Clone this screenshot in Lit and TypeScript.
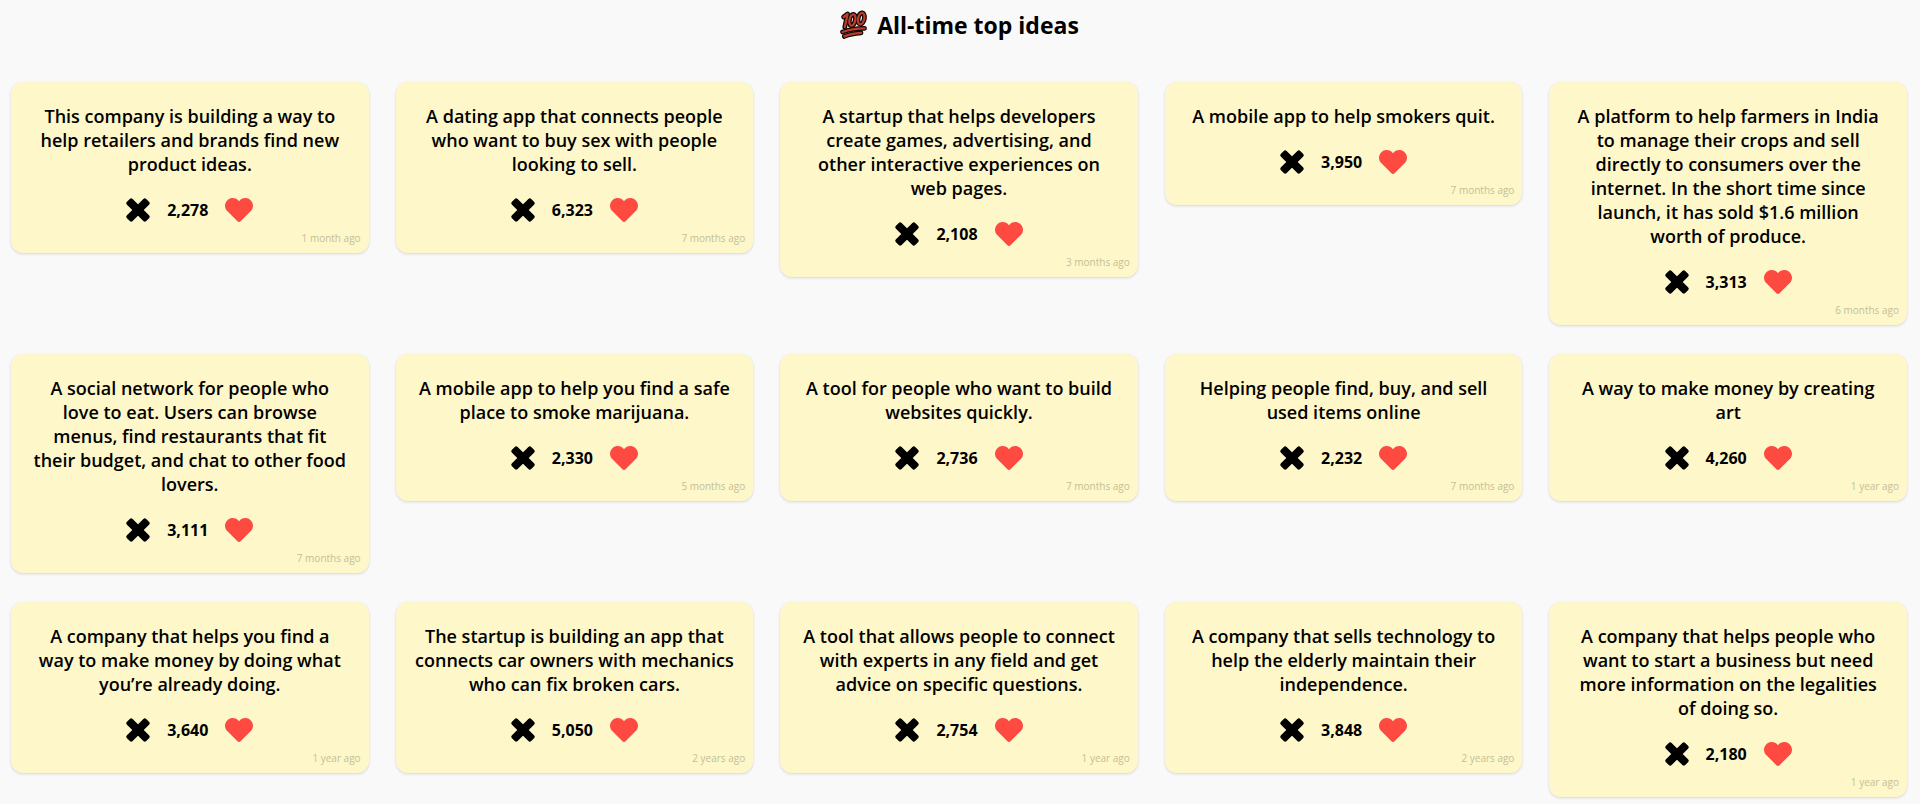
import { LitElement, html, css, svg } from "lit";
import { customElement, property } from "lit/decorators.js";

interface Idea {
  text: string;
  votes: number;
  age: string;
}

const IDEAS: Idea[] = [
  { text: "This company is building a way to help retailers and brands find new product ideas.", votes: 2278, age: "1 month ago" },
  { text: "A dating app that connects people who want to buy sex with people looking to sell.", votes: 6323, age: "7 months ago" },
  { text: "A startup that helps developers create games, advertising, and\nother interactive experiences on\nweb pages.", votes: 2108, age: "3 months ago" },
  { text: "A mobile app to help smokers quit.", votes: 3950, age: "7 months ago" },
  { text: "A platform to help farmers in India\nto manage their crops and sell directly to consumers over the internet. In the short time since launch, it has sold $1.6 million\nworth of produce.", votes: 3313, age: "6 months ago" },
  { text: "A social network for people who\nlove to eat. Users can browse menus, find restaurants that fit\ntheir budget, and chat to other food lovers.", votes: 3111, age: "7 months ago" },
  { text: "A mobile app to help you find a safe place to smoke marijuana.", votes: 2330, age: "5 months ago" },
  { text: "A tool for people who want to build websites quickly.", votes: 2736, age: "7 months ago" },
  { text: "Helping people find, buy, and sell used items online", votes: 2232, age: "7 months ago" },
  { text: "A way to make money by creating\nart", votes: 4260, age: "1 year ago" },
  { text: "A company that helps you find a\nway to make money by doing what you’re already doing.", votes: 3640, age: "1 year ago" },
  { text: "The startup is building an app that connects car owners with mechanics who can fix broken cars.", votes: 5050, age: "2 years ago" },
  { text: "A tool that allows people to connect with experts in any field and get advice on specific questions.", votes: 2754, age: "1 year ago" },
  { text: "A company that sells technology to help the elderly maintain their independence.", votes: 3848, age: "2 years ago" },
  { text: "A company that helps people who want to start a business but need more information on the legalities\nof doing so.", votes: 2180, age: "1 year ago" },
];

const hundredMarks = svg`
  <path d="M4.6 7 L8.6 4 L5.8 17" />
  <ellipse cx="13.4" cy="10" rx="2.9" ry="5.8" transform="rotate(12 13.4 10)" />
  <ellipse cx="22.2" cy="8.6" rx="3.1" ry="5.8" transform="rotate(12 22.2 8.6)" />
  <path d="M3.6 22 Q13 18.6 25.5 18.4" />
  <path d="M5.4 26.4 Q12 23.4 22 22.8" />
`;

@customElement("idea-card")
export class IdeaCard extends LitElement {
  @property({ attribute: false }) idea!: Idea;

  static styles = css`
    :host {
      display: block;
    }
    .card {
      background: #fef7c9;
      border-radius: 12px;
      box-shadow: 0 1px 3px rgba(0, 0, 0, 0.14);
      padding: 22px 8px 8px;
    }
    .text {
      margin: 0 11px;
      font-size: 18px;
      line-height: 24px;
      font-weight: 600;
      text-align: center;
      white-space: pre-line;
    }
    .votes {
      display: flex;
      justify-content: center;
      align-items: center;
      gap: 17px;
      margin-top: 22px;
      height: 24px;
    }
    .count {
      font-size: 16px;
      line-height: 24px;
      font-weight: 700;
    }
    .vote {
      display: flex;
      padding: 0;
      border: 0;
      background: none;
      color: #000;
      cursor: pointer;
    }
    .love {
      color: #ff4a41;
    }
    .age {
      display: block;
      margin-top: 9px;
      font-size: 10px;
      line-height: 14px;
      font-weight: 400;
      text-align: right;
      color: #c4bf98;
    }
  `;

  render() {
    const { text, votes, age } = this.idea;
    return html`
      <article class="card">
        <p class="text">${text}</p>
        <div class="votes">
          <button class="vote" type="button" aria-label="Dislike">
            <svg width="24" height="24" viewBox="0 0 24 24" fill="currentColor" aria-hidden="true">
              <rect x="-1.6" y="8" width="27.2" height="8" rx="2" transform="rotate(45 12 12)" />
              <rect x="-1.6" y="8" width="27.2" height="8" rx="2" transform="rotate(-45 12 12)" />
            </svg>
          </button>
          <span class="count">${votes.toLocaleString("en-US")}</span>
          <button class="vote love" type="button" aria-label="Like">
            <svg width="28" height="24" viewBox="0 0 28 24" fill="currentColor" aria-hidden="true">
              <path d="M14 3.2 C11.2 -0.6 5.9 -0.7 2.7 1.9 C-0.7 4.8 -0.9 9.8 2.2 13 L12.7 23.5 Q14 24.6 15.3 23.5 L25.8 13 C28.9 9.8 28.7 4.8 25.3 1.9 C22.1 -0.7 16.8 -0.6 14 3.2 Z" />
            </svg>
          </button>
        </div>
        <time class="age">${age}</time>
      </article>
    `;
  }
}

@customElement("app-root")
export class AppRoot extends LitElement {
  static styles = css`
    :host {
      display: block;
      min-height: 100vh;
      box-sizing: border-box;
      padding: 8px 13px 6px 11px;
      background: #f9f9f9;
      color: #000;
      font-family: "Open Sans", "Noto Sans", sans-serif;
    }
    .title {
      display: flex;
      justify-content: center;
      align-items: center;
      gap: 8px;
      margin: 0 0 40px;
      font-size: 23px;
      line-height: 34px;
      font-weight: 700;
    }
    .outline {
      stroke: #0c0604;
      stroke-width: 4.8;
    }
    .ink {
      stroke: #bd3c2b;
      stroke-width: 2.3;
    }
    .grid {
      display: grid;
      grid-template-columns: repeat(5, minmax(0, 1fr));
      align-items: start;
      gap: 29px 27px;
    }
  `;

  render() {
    return html`
      <main>
        <h1 class="title">
          <svg width="30" height="30" viewBox="0 0 30 30" fill="none" stroke-linecap="round" stroke-linejoin="round" role="img" aria-label="Hundred points">
            <g class="outline">${hundredMarks}</g>
            <g class="ink">${hundredMarks}</g>
          </svg>
          All-time top ideas
        </h1>
        <section class="grid">
          ${IDEAS.map((idea) => html`<idea-card .idea=${idea}></idea-card>`)}
        </section>
      </main>
    `;
  }
}
